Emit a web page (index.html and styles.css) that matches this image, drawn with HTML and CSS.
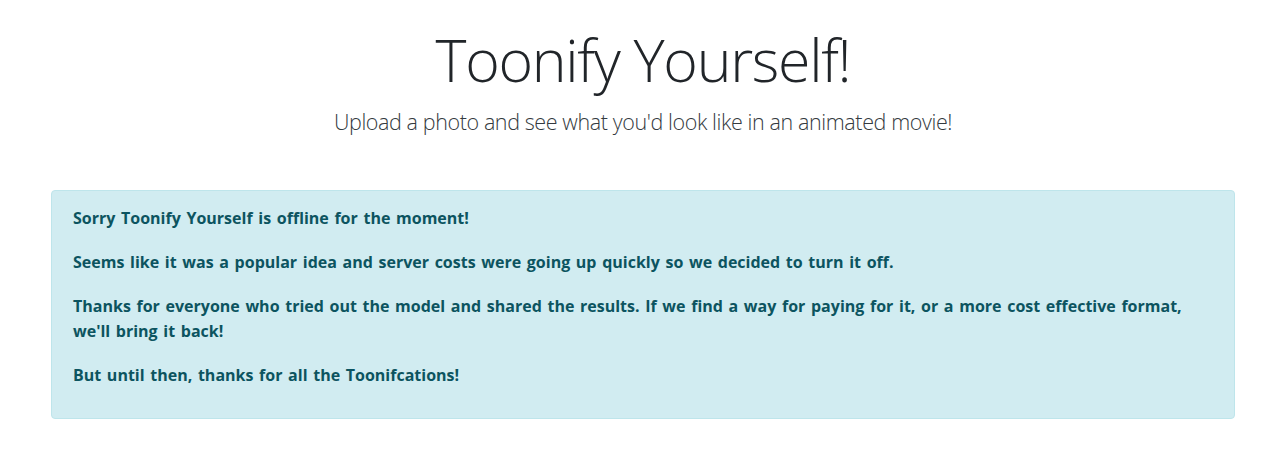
FILE: index.html
```html
<!DOCTYPE html>
<html lang="en">
<head>
    <meta charset="UTF-8">
    <meta name="viewport" content="width=device-width, initial-scale=1.0">
    <link rel="stylesheet" href="styles.css">
    <title>Toonify Yourself!</title>
</head>
<body>
    <div class="page">
        <header class="hero">
            <h1 class="hero-title">Toonify Yourself!</h1>
            <p class="hero-lead">Upload a photo and see what you'd look like in an animated movie!</p>
        </header>

        <div class="notice">
            <p>Sorry Toonify Yourself is offline for the moment!</p>
            <p>Seems like it was a popular idea and server costs were going up quickly so we decided to turn it off.</p>
            <p>Thanks for everyone who tried out the model and shared the results. If we find a way for paying for it, or a more cost effective format, we'll bring it back!</p>
            <p>But until then, thanks for all the Toonifcations!</p>
        </div>
    </div>
</body>
</html>
```

FILE: styles.css
```css
body {
    margin: 0;
    padding: 0;
    background-color: #ffffff;
    font-family: 'Open Sans', 'Noto Sans', sans-serif;
    color: #212529;
}

.page {
    width: 1184px;
    margin-left: 51px;
    padding-top: 19px;
}

.hero {
    text-align: center;
    margin-bottom: 53px;
}

.hero-title {
    font-size: 59px;
    font-weight: 300;
    line-height: 80px;
    letter-spacing: -1.3px;
    margin: 0;
    color: #212529;
}

.hero-lead {
    font-size: 21.5px;
    font-weight: 300;
    line-height: 30px;
    letter-spacing: -0.4px;
    margin: 8px 0 0;
    color: #343a40;
}

.notice {
    background-color: #d1ecf1;
    border: 1px solid #bee5eb;
    border-radius: 4px;
    color: #0c5460;
    padding: 15px 44px 11px 21px;
}

.notice p {
    font-size: 16px;
    font-weight: bold;
    line-height: 25px;
    word-spacing: 1.5px;
    margin: 0 0 19px;
}
```
